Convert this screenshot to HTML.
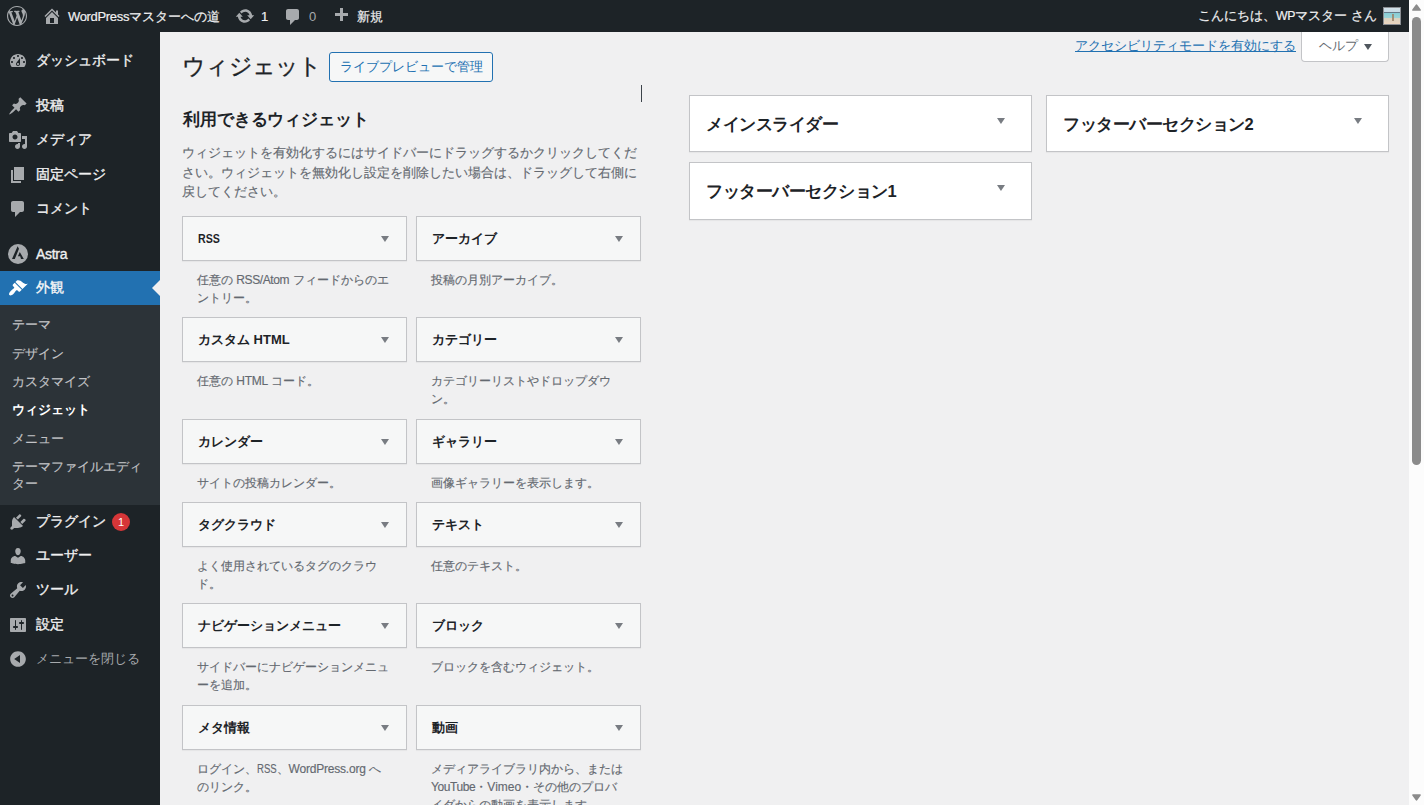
<!DOCTYPE html>
<html lang="ja">
<head>
<meta charset="utf-8">
<title>ウィジェット ‹ WordPressマスターへの道 — WordPress</title>
<style>
*{box-sizing:border-box;margin:0;padding:0}
html,body{width:1424px;height:805px;overflow:hidden;background:#f0f0f1}
body{font-family:"Liberation Sans",sans-serif;font-size:13px;line-height:18.2px;color:#3c434a;position:relative}
.abs{position:absolute;white-space:nowrap}
svg{display:block}

/* ---------- admin bar ---------- */
#bar{position:absolute;left:0;top:0;width:1409px;height:32px;background:#1d2327;color:#f0f0f1}
#bar .t{position:absolute;top:1px;height:32px;line-height:32px;font-size:13px;white-space:nowrap;color:#f0f0f1;-webkit-text-stroke:.2px #f0f0f1}
#bar svg{position:absolute;fill:#a7aaad}

/* ---------- side menu ---------- */
#menu{position:absolute;left:0;top:32px;width:160px;height:773px;background:#1d2327}
.mi{position:absolute;left:0;width:160px;height:34px}
.mi svg{position:absolute;left:8px;top:7px;width:20px;height:20px;fill:#a7aaad}
.mi span.l{position:absolute;left:36px;top:-1px;height:34px;line-height:34px;font-size:14px;color:#f0f0f1;white-space:nowrap;-webkit-text-stroke:.35px #f0f0f1}
.mi.cur{background:#2271b1}
.mi.cur svg{fill:#fff}
.mi.cur span.l{color:#fff}
#sub{position:absolute;left:0;top:273px;width:160px;height:200px;background:#2c3338}
#sub div{position:absolute;left:12px;font-size:13px;line-height:18.2px;color:#c3c4c7;white-space:nowrap;-webkit-text-stroke:.15px #c3c4c7}
#sub div.on{color:#fff;font-weight:bold;-webkit-text-stroke:0}


/* ---------- content ---------- */
#content{position:absolute;left:160px;top:32px;width:1249px;height:773px;overflow:hidden}
#content .abs{position:absolute;white-space:nowrap}
h1{position:absolute;left:22px;top:19px;font-size:23px;font-weight:400;line-height:30px;letter-spacing:-.75px;-webkit-text-stroke:.3px #1d2327;color:#1d2327;white-space:nowrap}
#pta{position:absolute;left:169px;top:20px;width:164px;height:30px;border:1px solid #2271b1;border-radius:3px;background:#f6f7f7;color:#2271b1;font-size:13px;line-height:28px;text-align:center;white-space:nowrap}
h2.av{position:absolute;left:23px;top:76px;font-size:16.9px;letter-spacing:-.12px;font-weight:bold;line-height:24px;color:#1d2327;white-space:nowrap}
#desc{position:absolute;left:22px;top:111px;font-size:13px;line-height:19.5px;color:#646970;white-space:nowrap;-webkit-text-stroke:.15px #646970}
.w{position:absolute;width:225px;height:45px;border:1px solid #c3c4c7;background:#f6f7f7;box-shadow:0 1px 1px rgba(0,0,0,.04)}
.w b{position:absolute;left:15px;top:0;height:43px;line-height:43px;font-size:13px;font-weight:bold;color:#1d2327;white-space:nowrap}
.w svg{position:absolute;right:12px;top:11px;width:20px;height:20px;fill:#787c82}
.d{position:absolute;font-size:12px;line-height:18.2px;color:#646970;white-space:nowrap;-webkit-text-stroke:.15px #646970}
.sbx{position:absolute;width:343px;height:57px;border:1px solid #c3c4c7;background:#fff;box-shadow:0 1px 1px rgba(0,0,0,.04)}
.sbx b{position:absolute;left:16px;top:0;height:56px;line-height:56px;font-size:16.5px;letter-spacing:-.5px;font-weight:bold;color:#1d2327;white-space:nowrap}
.sx{display:inline-block;transform-origin:0 50%;white-space:nowrap}
.sbx svg{position:absolute;right:21px;top:14px;width:20px;height:20px;fill:#787c82}
#help{position:absolute;left:1141px;top:0;width:88px;height:30px;border:1px solid #c3c4c7;border-top:none;border-radius:0 0 4px 4px;background:#fff;color:#646970;font-size:13px;line-height:27px;white-space:nowrap}
#acc{position:absolute;left:915px;top:4px;font-size:13px;line-height:20px;color:#2271b1;text-decoration:underline;white-space:nowrap}

/* ---------- scrollbar ---------- */
#sb{position:absolute;left:1409px;top:0;width:15px;height:805px;background:#fcfcfc}
#sb .th{position:absolute;left:3px;top:17px;width:9px;height:448px;border-radius:4.5px;background:#8b8b8b}
#sb svg{position:absolute;left:3px;fill:#8b8b8b}
</style>
</head>
<body>

<!-- ================= ADMIN BAR ================= -->
<div id="bar">
  <svg style="left:7px;top:6px;width:20px;height:20px" viewBox="0 0 20 20"><path d="M20 10c0-5.51-4.49-10-10-10C4.48 0 0 4.49 0 10c0 5.52 4.48 10 10 10 5.51 0 10-4.48 10-10zM7.78 15.37L4.37 6.22c.55-.02 1.17-.08 1.17-.08.5-.06.44-1.13-.06-1.11 0 0-1.45.11-2.37.11-.18 0-.37 0-.58-.01C4.12 2.69 6.87 1.11 10 1.11c2.33 0 4.45.87 6.05 2.34-.68-.11-1.65.39-1.65 1.58 0 .74.45 1.36.9 2.1.35.61.55 1.36.55 2.46 0 1.49-1.4 5-1.4 5l-3.03-8.37c.54-.02.82-.17.82-.17.5-.05.44-1.25-.06-1.22 0 0-1.44.12-2.38.12-.87 0-2.33-.12-2.33-.12-.5-.03-.56 1.2-.06 1.22l.92.08 1.26 3.41zM17.41 10c.24-.64.74-1.87.43-4.25.7 1.29 1.05 2.71 1.05 4.25 0 3.29-1.73 6.24-4.4 7.78.97-2.59 1.94-5.2 2.92-7.78zM6.1 18.09C3.12 16.65 1.11 13.53 1.11 10c0-1.3.23-2.48.72-3.59C3.25 10.3 4.67 14.2 6.1 18.09zm4.03-6.63l2.58 6.98c-.86.29-1.76.45-2.71.45-.79 0-1.57-.11-2.29-.33.81-2.38 1.62-4.74 2.42-7.1z"/></svg>
  <svg style="left:42px;top:6px;width:20px;height:20px" viewBox="0 0 20 20"><path d="M16 8.5l1.53 1.530-1.060 1.060L10 4.620l-6.470 6.470-1.060-1.060L10 2.500l4 4v-2h2v4zm-6-2.460l6 5.990V18H4v-5.970zM12 17v-5H8v5h4z"/></svg>
  <div class="t" style="left:68px"><span style="letter-spacing:-.33px">WordPress</span>マスターへの道</div>
  <svg style="left:235px;top:6px;width:20px;height:20px" viewBox="0 0 20 20"><path d="M10.200 3.280c3.530 0 6.430 2.610 6.920 6h2.080l-3.500 4-3.500-4h2.320c-.450-1.970-2.210-3.450-4.320-3.450-1.450 0-2.730.710-3.540 1.780L4.950 5.660C6.230 4.200 8.110 3.280 10.200 3.280zm-.400 13.440c-3.520 0-6.430-2.610-6.920-6H.800l3.500-4c1.170 1.330 2.330 2.670 3.500 4H5.480c.450 1.970 2.210 3.450 4.320 3.450 1.450 0 2.730-.710 3.540-1.780l1.710 1.950c-1.280 1.460-3.150 2.380-5.250 2.380z"/></svg>
  <div class="t" style="left:261px">1</div>
  <svg style="left:283px;top:7px;width:20px;height:20px" viewBox="0 0 20 20"><path d="M5 2h9c1.100 0 2 .900 2 2v7c0 1.100-.900 2-2 2h-2l-5 5v-5H5c-1.100 0-2-.900-2-2V4c0-1.100.900-2 2-2z"/></svg>
  <div class="t" style="left:309px;color:#a7aaad;-webkit-text-stroke:0">0</div>
  <svg style="left:331px;top:6px;width:20px;height:20px" viewBox="0 0 20 20"><path d="M17 7v3h-5v5H9v-5H4V7h5V2h3v5h5z"/></svg>
  <div class="t" style="left:357px">新規</div>
  <div class="t" style="right:32px;top:0">こんにちは、<span style="font-size:12.3px;letter-spacing:-.2px">WP</span>マスター さん</div>
  <div id="avatar" style="position:absolute;left:1383px;top:7px;width:18px;height:18px;border:1px solid #8c8f94;background:linear-gradient(#d3e2ea 0,#c7dbe6 24%,#55677a 24%,#6f8896 31%,#86cdd6 31%,#9bd3d6 60%,#d9d2c0 64%,#ecd5bf 100%)"><i style="position:absolute;left:8px;top:6px;width:2px;height:7px;background:#9c8468;opacity:.85"></i></div>
</div>

<!-- ================= SIDE MENU ================= -->
<div id="menu">
  <div class="mi" style="top:12px"><svg viewBox="0 0 20 20"><path d="M3.760 16h12.480c1.100-1.370 1.760-3.110 1.760-5 0-4.420-3.580-8-8-8s-8 3.580-8 8c0 1.890.660 3.630 1.760 5zM10 4c.550 0 1 .450 1 1s-.450 1-1 1-1-.450-1-1 .450-1 1-1zM6 6c.550 0 1 .450 1 1s-.450 1-1 1-1-.450-1-1 .450-1 1-1zm8 0c.550 0 1 .450 1 1s-.450 1-1 1-1-.450-1-1 .450-1 1-1zm-5.370 5.550L12 7v6c0 1.100-.900 2-2 2s-2-.900-2-2c0-.570.240-1.080.630-1.450zM4 10c.550 0 1 .450 1 1s-.450 1-1 1-1-.450-1-1 .450-1 1-1zm12 0c.550 0 1 .450 1 1s-.450 1-1 1-1-.450-1-1 .450-1 1-1zm-5 3c0-.550-.450-1-1-1s-1 .450-1 1 .450 1 1 1 1-.450 1-1z"/></svg><span class="l">ダッシュボード</span></div>
  <div class="mi" style="top:57px"><svg viewBox="0 0 20 20"><path d="M10.440 3.020l1.820-1.820 6.360 6.350-1.830 1.820c-1.050-.680-2.480-.570-3.410.360l-.750.750c-.920.930-1.040 2.350-.350 3.410l-1.830 1.820-2.410-2.410-2.800 2.790c-.420.420-3.380 2.710-3.800 2.290s1.860-3.390 2.280-3.810l2.790-2.790L4.100 9.360l1.830-1.820c1.050.690 2.480.570 3.400-.360l.750-.750c.930-.920 1.050-2.350.360-3.410z"/></svg><span class="l">投稿</span></div>
  <div class="mi" style="top:91px"><svg viewBox="0 0 20 20"><path d="M13 11V4c0-.550-.450-1-1-1h-1.670L9 1H5L3.670 3H2c-.550 0-1 .450-1 1v7c0 .550.450 1 1 1h10c.550 0 1-.450 1-1zM7 4.500c1.380 0 2.500 1.120 2.500 2.500S8.380 9.500 7 9.500 4.500 8.380 4.500 7 5.620 4.500 7 4.500zM14 6h5v10.500c0 1.380-1.120 2.500-2.500 2.500S14 17.880 14 16.500s1.120-2.500 2.500-2.500c.170 0 .340.020.500.050V9h-3V6zm-4 8.050V13h2v3.500c0 1.380-1.120 2.500-2.500 2.500S7 17.880 7 16.500 8.120 14 9.500 14c.170 0 .340.020.500.050z"/></svg><span class="l">メディア</span></div>
  <div class="mi" style="top:126px"><svg viewBox="0 0 20 20"><path d="M6 15V2h10v13H6zm-1 1h8v2H3V5h2v11z"/></svg><span class="l">固定ページ</span></div>
  <div class="mi" style="top:160px"><svg viewBox="0 0 20 20"><path d="M5 2h9c1.100 0 2 .900 2 2v7c0 1.100-.900 2-2 2h-2l-5 5v-5H5c-1.100 0-2-.900-2-2V4c0-1.100.900-2 2-2z"/></svg><span class="l">コメント</span></div>
  <div class="mi" style="top:205px"><svg viewBox="0 0 20 20"><circle cx="10" cy="10" r="10"/><path d="M9.600 2.200L11 4.700 6.800 15H4z M11.800 8l4 7H13l-.800-2.700H9.900z" fill="#1d2327"/></svg><span class="l" style="letter-spacing:-.3px;top:0">Astra</span></div>
  <div class="mi cur" style="top:239px"><svg viewBox="0 0 20 20"><path d="M14.480 11.060L7.410 3.990l1.500-1.500c.500-.560 2.300-.470 3.510.320 1.210.800 1.430 1.280 2.910 2.100 1.180.640 2.450 1.260 4.450.850zm-.710.710L6.700 4.700 4.930 6.470c-.390.390-.390 1.020 0 1.410l1.060 1.060c.390.390.390 1.030 0 1.420-.600.600-1.430 1.110-2.210 1.690-.350.260-.700.530-1.010.840C1.430 14.230.400 16.080 1.400 17.070c.990 1 2.840-.030 4.180-1.360.310-.310.580-.660.850-1.020.570-.780 1.080-1.610 1.690-2.210.390-.390 1.020-.390 1.410 0l1.060 1.060c.390.390 1.020.390 1.410 0z"/></svg><span class="l">外観</span>
    <div style="position:absolute;right:0;top:9px;width:0;height:0;border:8px solid transparent;border-right-color:#f0f0f1"></div></div>
  <div id="sub">
    <div style="top:11px">テーマ</div>
    <div style="top:40px">デザイン</div>
    <div style="top:68px">カスタマイズ</div>
    <div class="on" style="top:96px">ウィジェット</div>
    <div style="top:125px">メニュー</div>
    <div style="top:154px;line-height:16.5px">テーマファイルエディ<br>ター</div>
  </div>
  <div class="mi" style="top:473px"><svg viewBox="0 0 20 20"><path d="M13.110 4.360L9.870 7.600 8 5.730l3.240-3.240c.350-.340 1.050-.200 1.560.320.520.510.660 1.210.310 1.550zm-8 1.770l.910-1.120 9.010 9.010-1.190.840c-.710.710-2.630 1.160-3.820 1.160H6.140L4.900 17.260c-.590.590-1.540.590-2.120 0-.590-.580-.590-1.530 0-2.120L4 13.900V10c0-1.190.400-3.160 1.110-3.870zm7.260 3.970l3.240-3.240c.340-.350 1.040-.210 1.550.310.520.510.660 1.210.310 1.550l-3.240 3.250z"/></svg><span class="l">プラグイン</span>
    <div style="position:absolute;left:112px;top:8px;width:18px;height:18px;border-radius:9px;background:#d63638;color:#fff;font-size:11px;line-height:18px;text-align:center">1</div></div>
  <div class="mi" style="top:507px"><svg viewBox="0 0 20 20"><path d="M10 9.250c-2.270 0-2.730-3.440-2.730-3.440C7 4.020 7.820 2 9.970 2c2.160 0 2.980 2.020 2.710 3.810 0 0-.410 3.440-2.680 3.440zm0 2.570L12.720 10c2.390 0 4.520 2.330 4.520 4.530v2.490s-3.650 1.130-7.240 1.130c-3.650 0-7.240-1.130-7.240-1.130v-2.490c0-2.250 1.940-4.480 4.470-4.480z"/></svg><span class="l">ユーザー</span></div>
  <div class="mi" style="top:541px"><svg viewBox="0 0 20 20"><path d="M16.680 9.770c-1.340 1.340-3.300 1.670-4.950.990l-5.410 6.520c-.990.990-2.590.990-3.580 0s-.990-2.590 0-3.570l6.520-5.420c-.680-1.650-.350-3.610.990-4.950 1.280-1.280 3.120-1.620 4.720-1.060l-2.890 2.890 2.820 2.820 2.860-2.870c.530 1.580.180 3.390-1.080 4.650zM3.810 16.210c.400.390 1.040.390 1.430 0 .400-.400.400-1.040 0-1.430-.390-.400-1.030-.400-1.430 0-.390.390-.390 1.030 0 1.430z"/></svg><span class="l">ツール</span></div>
  <div class="mi" style="top:576px"><svg viewBox="0 0 20 20"><path d="M18 16V4c0-.550-.450-1-1-1H3c-.550 0-1 .450-1 1v12c0 .550.450 1 1 1h14c.550 0 1-.450 1-1zM8 11h1c.550 0 1 .450 1 1s-.450 1-1 1H8v1.500c0 .280-.220.500-.500.500s-.500-.220-.500-.500V13H6c-.550 0-1-.450-1-1s.450-1 1-1h1V5.500c0-.280.220-.500.500-.500s.500.220.500.500V11zm5-2h-1c-.550 0-1-.450-1-1s.450-1 1-1h1V5.500c0-.280.220-.500.500-.500s.500.220.500.500V7h1c.550 0 1 .450 1 1s-.450 1-1 1h-1v5.500c0 .280-.220.500-.500.500s-.500-.220-.500-.500V9z"/></svg><span class="l">設定</span></div>
  <div class="mi" style="top:610px"><svg viewBox="0 0 20 20"><path d="M10 2.160c4.330 0 7.840 3.510 7.840 7.840s-3.510 7.840-7.840 7.840S2.160 14.330 2.160 10 5.670 2.160 10 2.160zm2 11.720V6.120L6.180 9.970z"/></svg><span class="l" style="font-size:13px;color:#a7aaad;top:0;-webkit-text-stroke:0">メニューを閉じる</span></div>
</div>

<!-- ================= CONTENT ================= -->
<div id="content">
<h1>ウィジェット</h1>
<div id="pta">ライブプレビューで管理</div>
<div id="acc">アクセシビリティモードを有効にする</div>
<div id="help"><span style="position:absolute;left:17px;top:0">ヘルプ</span><svg style="position:absolute;left:55px;top:4px;width:20px;height:20px;fill:#50575e" viewBox="0 0 20 20"><path d="M15 8l-4.030 6L7 8h8z"/></svg></div>
<div class="abs" style="left:481px;top:53px;width:1px;height:17px;background:#3c434a"></div>
<h2 class="av">利用できるウィジェット</h2>
<div id="desc">ウィジェットを有効化するにはサイドバーにドラッグするかクリックしてくだ<br>さい。ウィジェットを無効化し設定を削除したい場合は、ドラッグして右側に<br>戻してください。</div>
<div class="w" style="left:22px;top:184px"><b><span class="sx" style="transform:scaleX(.82)">RSS</span></b><svg viewBox="0 0 20 20"><path d="M15 8l-4.030 6L7 8h8z"/></svg></div>
<div class="d" style="left:37px;top:239px">任意の <span style="letter-spacing:-.4px">RSS/Atom</span> フィードからのエ<br>ントリー。</div>
<div class="w" style="left:256px;top:184px"><b>アーカイブ</b><svg viewBox="0 0 20 20"><path d="M15 8l-4.030 6L7 8h8z"/></svg></div>
<div class="d" style="left:271px;top:239px">投稿の月別アーカイブ。</div>
<div class="w" style="left:22px;top:285px"><b>カスタム HTML</b><svg viewBox="0 0 20 20"><path d="M15 8l-4.030 6L7 8h8z"/></svg></div>
<div class="d" style="left:37px;top:340px">任意の <span style="letter-spacing:-.3px">HTML</span> コード。</div>
<div class="w" style="left:256px;top:285px"><b>カテゴリー</b><svg viewBox="0 0 20 20"><path d="M15 8l-4.030 6L7 8h8z"/></svg></div>
<div class="d" style="left:271px;top:340px">カテゴリーリストやドロップダウ<br>ン。</div>
<div class="w" style="left:22px;top:387px"><b>カレンダー</b><svg viewBox="0 0 20 20"><path d="M15 8l-4.030 6L7 8h8z"/></svg></div>
<div class="d" style="left:37px;top:442px">サイトの投稿カレンダー。</div>
<div class="w" style="left:256px;top:387px"><b>ギャラリー</b><svg viewBox="0 0 20 20"><path d="M15 8l-4.030 6L7 8h8z"/></svg></div>
<div class="d" style="left:271px;top:442px">画像ギャラリーを表示します。</div>
<div class="w" style="left:22px;top:470px"><b>タグクラウド</b><svg viewBox="0 0 20 20"><path d="M15 8l-4.030 6L7 8h8z"/></svg></div>
<div class="d" style="left:37px;top:525px">よく使用されているタグのクラウ<br>ド。</div>
<div class="w" style="left:256px;top:470px"><b>テキスト</b><svg viewBox="0 0 20 20"><path d="M15 8l-4.030 6L7 8h8z"/></svg></div>
<div class="d" style="left:271px;top:525px">任意のテキスト。</div>
<div class="w" style="left:22px;top:571px"><b>ナビゲーションメニュー</b><svg viewBox="0 0 20 20"><path d="M15 8l-4.030 6L7 8h8z"/></svg></div>
<div class="d" style="left:37px;top:626px">サイドバーにナビゲーションメニュ<br>ーを追加。</div>
<div class="w" style="left:256px;top:571px"><b>ブロック</b><svg viewBox="0 0 20 20"><path d="M15 8l-4.030 6L7 8h8z"/></svg></div>
<div class="d" style="left:271px;top:626px">ブロックを含むウィジェット。</div>
<div class="w" style="left:22px;top:673px"><b>メタ情報</b><svg viewBox="0 0 20 20"><path d="M15 8l-4.030 6L7 8h8z"/></svg></div>
<div class="d" style="left:37px;top:728px">ログイン、<span class="sx" style="width:19.5px"><span class="sx" style="transform:scaleX(.8)">RSS</span></span>、<span style="letter-spacing:-.2px">WordPress.org</span> へ<br>のリンク。</div>
<div class="w" style="left:256px;top:673px"><b>動画</b><svg viewBox="0 0 20 20"><path d="M15 8l-4.030 6L7 8h8z"/></svg></div>
<div class="d" style="left:271px;top:728px">メディアライブラリ内から、または<br><span style="letter-spacing:-.4px">YouTube</span>・Vimeo・その他のプロバ<br>イダからの動画を表示します。</div>
<div class="sbx" style="left:529px;top:63px"><b>メインスライダー</b><svg viewBox="0 0 20 20"><path d="M15 8l-4.030 6L7 8h8z"/></svg></div>
<div class="sbx" style="left:529px;top:130px;height:58px"><b>フッターバーセクション1</b><svg viewBox="0 0 20 20"><path d="M15 8l-4.030 6L7 8h8z"/></svg></div>
<div class="sbx" style="left:886px;top:63px"><b>フッターバーセクション2</b><svg viewBox="0 0 20 20"><path d="M15 8l-4.030 6L7 8h8z"/></svg></div>
</div>

<!-- ================= SCROLLBAR ================= -->
<div id="sb">
  <svg style="top:4px;width:9px;height:7px" viewBox="0 0 9 7"><path d="M4.5 0.300Q5 0.300 5.400 0.900L8.700 5.600Q9.200 6.700 8 6.700H1Q-0.200 6.700 0.300 5.600L3.600 0.900Q4 0.300 4.500 0.300z"/></svg>
  <div class="th"></div>
  <svg style="top:794px;width:9px;height:7px" viewBox="0 0 9 7"><path d="M4.5 6.700Q5 6.700 5.400 6.100L8.700 1.400Q9.200 0.300 8 0.300H1Q-0.200 0.300 0.300 1.400L3.600 6.100Q4 6.700 4.500 6.700z"/></svg>
</div>

</body>
</html>
